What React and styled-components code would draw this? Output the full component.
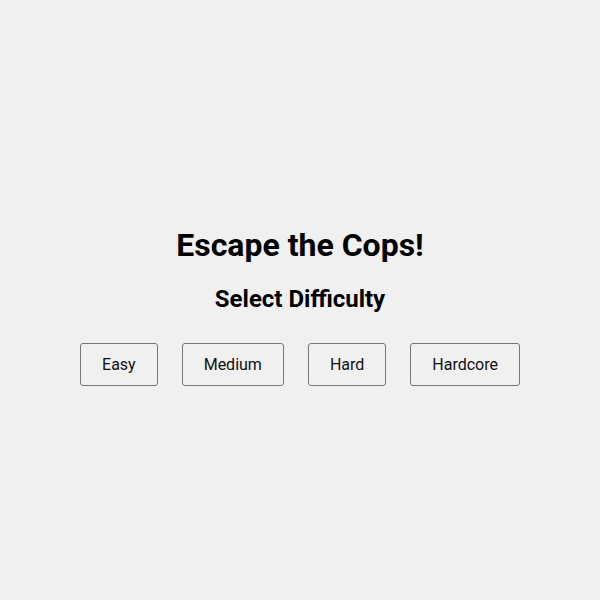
import styled, { createGlobalStyle } from "styled-components";

const GlobalStyle = createGlobalStyle`
  body {
    margin: 0;
    background: #f0f0f0;
    font-family: Roboto, "Liberation Sans", sans-serif;
    color: #000;
  }
`;

const Screen = styled.div`
  min-height: 100vh;
  display: flex;
  flex-direction: column;
  align-items: center;
  justify-content: center;
`;

const Title = styled.h1`
  font-size: 32px;
  font-weight: 700;
  margin: 21px 0 21px;
`;

const Subtitle = styled.h2`
  font-size: 24px;
  font-weight: 700;
  margin: 0 0 30px;
`;

const ButtonRow = styled.div`
  display: flex;
  gap: 24px;
  margin-bottom: 10px;
`;

const LevelButton = styled.button`
  font-family: Roboto, "Liberation Sans", sans-serif;
  font-size: 16px;
  color: #111;
  background: transparent;
  border: 1px solid #777;
  border-radius: 3px;
  padding: 11px 21px;
  cursor: pointer;
  &:hover {
    background: #e4e4e4;
  }
`;

const levels = ["Easy", "Medium", "Hard", "Hardcore"];

export default function App() {
  return (
    <>
      <GlobalStyle />
      <Screen>
        <Title>Escape the Cops!</Title>
        <Subtitle>Select Difficulty</Subtitle>
        <ButtonRow>
          {levels.map((level) => (
            <LevelButton key={level}>{level}</LevelButton>
          ))}
        </ButtonRow>
      </Screen>
    </>
  );
}
